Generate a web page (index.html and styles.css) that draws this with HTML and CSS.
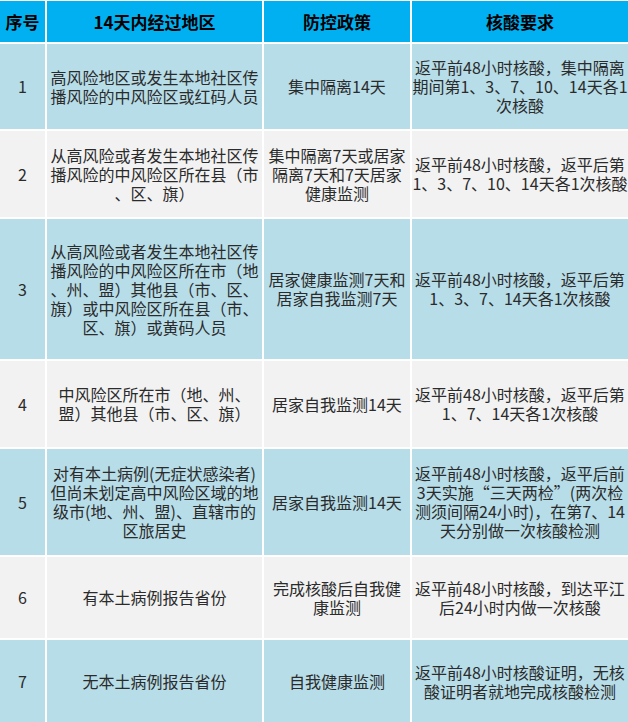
FILE: index.html
```html
<!DOCTYPE html>
<html lang="zh-CN">
<head>
<meta charset="utf-8">
<title>防控政策</title>
<link rel="stylesheet" href="styles.css">
</head>
<body>
<div class="grid">
  <div class="cell head">序号</div>
  <div class="cell head">14天内经过地区</div>
  <div class="cell head">防控政策</div>
  <div class="cell head">核酸要求</div>

  <div class="cell blue">1</div>
  <div class="cell blue">高风险地区或发生本地社区传<br>播风险的中风险区或红码人员</div>
  <div class="cell blue">集中隔离14天</div>
  <div class="cell blue">返平前48小时核酸，集中隔离<br>期间第1、3、7、10、14天各1<br>次核酸</div>

  <div class="cell gray">2</div>
  <div class="cell gray">从高风险或者发生本地社区传<br>播风险的中风险区所在县（市<br>、区、旗）</div>
  <div class="cell gray">集中隔离7天或居家<br>隔离7天和7天居家<br>健康监测</div>
  <div class="cell gray">返平前48小时核酸，返平后第<br>1、3、7、10、14天各1次核酸</div>

  <div class="cell blue">3</div>
  <div class="cell blue">从高风险或者发生本地社区传<br>播风险的中风险区所在市（地<br>、州、盟）其他县（市、区、<br>旗）或中风险区所在县（市、<br>区、旗）或黄码人员</div>
  <div class="cell blue">居家健康监测7天和<br>居家自我监测7天</div>
  <div class="cell blue">返平前48小时核酸，返平后第<br>1、3、7、14天各1次核酸</div>

  <div class="cell gray">4</div>
  <div class="cell gray">中风险区所在市（地、州、<br>盟）其他县（市、区、旗）</div>
  <div class="cell gray">居家自我监测14天</div>
  <div class="cell gray">返平前48小时核酸，返平后第<br>1、7、14天各1次核酸</div>

  <div class="cell blue">5</div>
  <div class="cell blue">对有本土病例(无症状感染者)<br>但尚未划定高中风险区域的地<br>级市(地、州、盟)、直辖市的<br>区旅居史</div>
  <div class="cell blue">居家自我监测14天</div>
  <div class="cell blue">返平前48小时核酸，返平后前<br>3天实施“三天两检”(两次检<br>测须间隔24小时)，在第7、14<br>天分别做一次核酸检测</div>

  <div class="cell gray">6</div>
  <div class="cell gray">有本土病例报告省份</div>
  <div class="cell gray">完成核酸后自我健<br>康监测</div>
  <div class="cell gray">返平前48小时核酸，到达平江<br>后24小时内做一次核酸</div>

  <div class="cell blue">7</div>
  <div class="cell blue">无本土病例报告省份</div>
  <div class="cell blue">自我健康监测</div>
  <div class="cell blue">返平前48小时核酸证明，无核<br>酸证明者就地完成核酸检测</div>
</div>
</body>
</html>
```

FILE: styles.css
```css
html, body {
  margin: 0;
  padding: 0;
  background: #ffffff;
}

body {
  width: 628px;
  height: 722px;
  overflow: hidden;
  font-family: "Noto Sans CJK SC", "Noto Sans", sans-serif;
}

.grid {
  display: grid;
  grid-template-columns: 45px 215px 146px 216px;
  grid-template-rows: 41px 85px 86px 140px 86px 106px 81px 83px;
  column-gap: 2px;
  row-gap: 2px;
  padding-top: 1px;
  background: #ffffff;
}

.cell {
  display: flex;
  align-items: center;
  justify-content: center;
  text-align: center;
  font-size: 16px;
  line-height: 19px;
  color: #2b2b2b;
  white-space: nowrap;
  overflow: hidden;
}

.head {
  background: #00b0f0;
  color: #000000;
  font-weight: 700;
  font-size: 17px;
}

.blue {
  background: #b7dde8;
}

.gray {
  background: #f2f2f2;
}
```
